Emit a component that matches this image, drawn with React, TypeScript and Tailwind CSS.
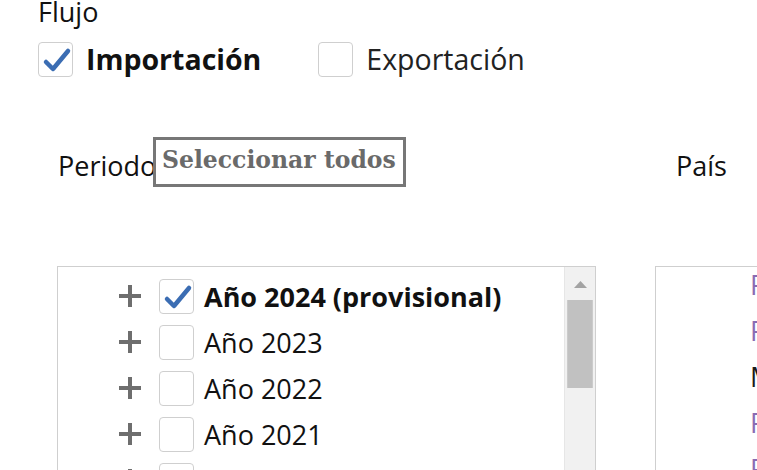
import React from 'react';

function Check() {
  return (
    <svg width="35" height="35" viewBox="0 0 35 35" className="block">
      <path d="M7 19 L14 26 L29 8" fill="none" stroke="#3b6db3" strokeWidth="4.5" strokeLinecap="round" strokeLinejoin="round" />
    </svg>
  );
}

function Box({ checked }: { checked?: boolean }) {
  return (
    <div className="w-[35px] h-[35px] shrink-0 rounded-[4px] border border-[#cfcfcf] bg-white">
      {checked && <Check />}
    </div>
  );
}

function Plus() {
  return (
    <svg width="24" height="24" viewBox="0 0 24 24" className="block shrink-0">
      <path d="M12 1 V23 M1 12 H23" stroke="#6e6e6e" strokeWidth="4" />
    </svg>
  );
}

export default function App() {
  const years = [
    { label: 'Año 2024 (provisional)', checked: true },
    { label: 'Año 2023' },
    { label: 'Año 2022' },
    { label: 'Año 2021' },
    { label: 'Año 2020' },
  ];

  const paises = [
    { t: 'Países', c: 'text-[#8a6bb3]' },
    { t: 'Países', c: 'text-[#8a6bb3]' },
    { t: 'México', c: 'text-[#1a1a1a]' },
    { t: 'Países', c: 'text-[#8a6bb3]' },
    { t: 'Países', c: 'text-[#8a6bb3]' },
  ];

  return (
    <div className="relative w-[757px] h-[470px] overflow-hidden bg-white text-[#111] font-['Open_Sans',sans-serif] text-[27px] leading-[27px]">
      <div className="pl-[38px]">
        <div className="-mt-[2px]">Flujo</div>
        <div className="mt-[17px] flex items-center text-[28.5px]">
          <Box checked />
          <span className="ml-[13px] font-bold">Importación</span>
          <span className="ml-[57px]"><Box /></span>
          <span className="ml-[13px] text-[#222]">Exportación</span>
        </div>
      </div>

      <div className="mt-[75px] flex">
        <div className="ml-[57px] w-[539px] shrink-0">
          <div className="relative pl-[1px]">
            Periodo
            <div className="absolute left-[96px] -top-[15px] h-[50px] w-[253px] border-[3px] border-[#777] bg-white pl-[6px] font-['DejaVu_Serif',serif] font-bold text-[23.5px] leading-[41px] text-[#6a6a6a] whitespace-nowrap">
              Seleccionar todos
            </div>
          </div>
          <div className="mt-[87px] flex h-[220px] border border-[#cfcfcf]">
            <div className="flex-1 pt-[6px] pl-[60px]">
              {years.map((y, i) => (
                <div key={i} className="flex h-[46px] items-center">
                  <Plus />
                  <span className="ml-[17px]"><Box checked={y.checked} /></span>
                  <span className={'ml-[10px] whitespace-nowrap ' + (y.checked ? 'font-bold' : '')}>{y.label}</span>
                </div>
              ))}
            </div>
            <div className="w-[31px] bg-[#f1f1f1] border-l border-[#e6e6e6] flex flex-col items-center">
              <div className="h-[33px] pt-[2px] flex items-center justify-center">
                <svg width="13" height="7" viewBox="0 0 13 7"><path d="M0 7 L6.5 0 L13 7 Z" fill="#a3a3a3" /></svg>
              </div>
              <div className="w-[26px] h-[88px] bg-[#c1c1c1] border-x border-[#cbcbcb]" />
            </div>
          </div>
        </div>

        <div className="ml-[59px] w-[300px] shrink-0">
          <div className="pl-[21px]">País</div>
          <div className="mt-[87px] h-[220px] border border-[#cfcfcf] bg-white overflow-hidden">
            <div className="-mt-[6px] pl-[94px]">
              {paises.map((p, i) => (
                <div key={i} className={'flex h-[46px] items-center whitespace-nowrap ' + p.c}>{p.t}</div>
              ))}
            </div>
          </div>
        </div>
      </div>
    </div>
  );
}
